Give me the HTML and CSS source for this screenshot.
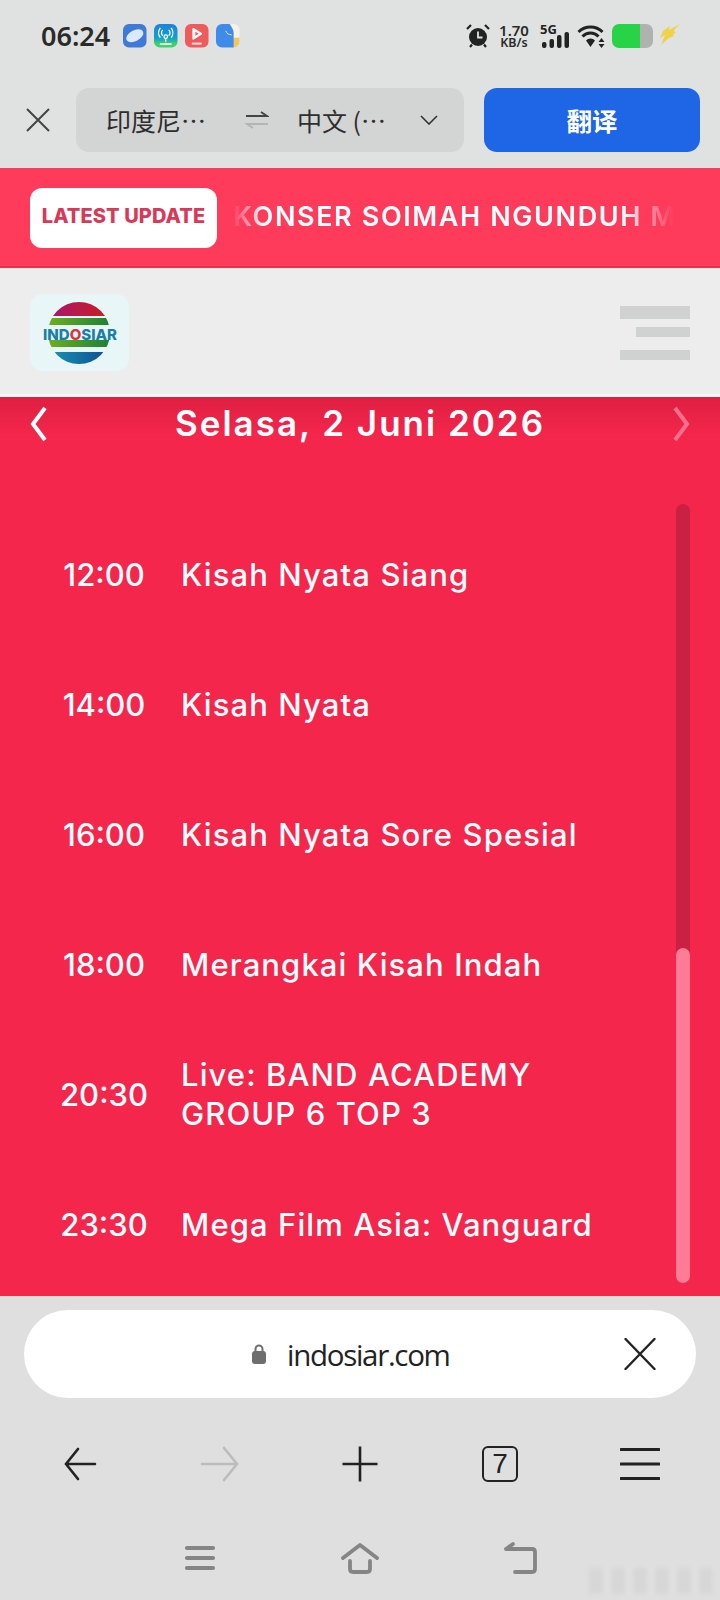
FILE: index.html
```html
<!DOCTYPE html>
<html lang="id">
<head>
<meta charset="utf-8">
<title>Indosiar</title>
<link rel="stylesheet" href="styles.css">
</head>
<body>
<div class="phone">
  <div class="status">
    <span class="clock">06:24</span>
    <div class="apps">
      <svg class="app" viewBox="0 0 24 24"><rect width="24" height="24" rx="6" fill="#3f7bd6"/><ellipse cx="12" cy="12" rx="9.500" ry="5.500" transform="rotate(-28 12 12)" fill="#dbe9fa"/></svg>
      <svg class="app" viewBox="0 0 24 24"><defs><linearGradient id="g1" x1="0" y1="0" x2="0" y2="1"><stop offset="0" stop-color="#1a82e0"/><stop offset=".6" stop-color="#14a0c8"/><stop offset=".85" stop-color="#3fd26a"/></linearGradient></defs><rect width="24" height="24" rx="6" fill="url(#g1)"/><circle cx="12" cy="13" r="1.800" fill="none" stroke="#fff" stroke-width="1.300"/><path d="M9 12a4 4 0 0 1 0-6M15 12a4 4 0 0 0 0-6M6.500 14a8 8 0 0 1 0-10M17.500 14a8 8 0 0 0 0-10M12 15v3" fill="none" stroke="#fff" stroke-width="1.300"/><path d="M6 20.500h12" stroke="#e8ffe0" stroke-width="2"/></svg>
      <svg class="app" viewBox="0 0 24 24"><rect width="24" height="24" rx="6" fill="#ef5b5b"/><path d="M8.500 5l8 5-8 5z" fill="#fff" stroke="#fff" stroke-width="2" stroke-linejoin="round"/><path d="M10.500 8l3.500 2-3.500 2z" fill="#ef5b5b"/><path d="M7 20h10" stroke="#ffe3e3" stroke-width="2"/></svg>
      <svg class="app" viewBox="0 0 24 24"><rect width="24" height="24" rx="6" fill="#f4f2ea"/><path d="M16 24h2a6 6 0 0 0 6-6v-4h-6z" fill="#f2c75c"/><path d="M6 0h8c2 3 4 6 4 9v15H6a6 6 0 0 1-6-6V6a6 6 0 0 1 6-6z" fill="#3f8bea"/><path d="M10 7c1 3 3 4 6 4" fill="none" stroke="#dbe9fa" stroke-width="1"/></svg>
    </div>
    <div class="sys">
      <svg class="alarm" viewBox="0 0 24 24"><circle cx="12" cy="13" r="9" fill="#222"/><path d="M12 7.500v6h4.500" fill="none" stroke="#e0e2e2" stroke-width="1.800"/><path d="M1 5l4-4M23 5l-4-4M4 23l2-2.500M20 23l-2-2.500" stroke="#222" stroke-width="2.200"/></svg>
      <div class="speed"><span class="speed-num">1.70</span><span class="speed-unit">KB/s</span></div>
      <div class="signal">
        <span class="net">5G</span>
        <svg class="bars" viewBox="0 0 27 16"><rect x="0" y="10" width="4.500" height="6" rx="2" fill="#222"/><rect x="7.500" y="7" width="4.500" height="9" rx="2" fill="#222"/><rect x="15" y="3" width="4.500" height="13" rx="2" fill="#222"/><rect x="22.500" y="0" width="4.500" height="16" rx="2" fill="#222"/></svg>
      </div>
      <svg class="wifi" viewBox="0 0 29 24"><path d="M1.500 8a17 17 0 0 1 24 0M5.500 12.500a11 11 0 0 1 16 0" fill="none" stroke="#222" stroke-width="3"/><path d="M9 16.500a6 6 0 0 1 9 0L13.500 23z" fill="#222"/><path d="M24.500 14l-3 4h6zM24.500 24l-3-4h6z" fill="#222"/></svg>
      <div class="battery"><span class="battery-fill"></span></div>
      <svg class="bolt" viewBox="0 0 20 21"><path d="M20 0L9 6l1-4-7 5-3 7 5-3-4 10 9-8-1 1 5-2-1-2 3-1-2-2 1-2z" fill="#eed24a"/></svg>
    </div>
  </div>

  <div class="translate">
    <svg class="tr-close" viewBox="0 0 24 24"><path d="M1 1l22 22M23 1L1 23" stroke="#444" stroke-width="2"/></svg>
    <div class="lang-pill">
      <span class="lang lang-a">印度尼…</span>
      <svg class="swap" viewBox="0 0 24 20"><path d="M1 6h21l-6-4" fill="none" stroke="#444" stroke-width="2"/><path d="M23 14H2l6 4" fill="none" stroke="#b4b4b4" stroke-width="2"/></svg>
      <span class="lang lang-b">中文 (…</span>
      <svg class="chev" viewBox="0 0 18 10"><path d="M1 1l8 8 8-8" fill="none" stroke="#333" stroke-width="1.600"/></svg>
    </div>
    <div class="tr-btn">翻译</div>
  </div>

  <div class="ticker">
    <div class="badge">LATEST UPDATE</div>
    <div class="marquee"><span>KONSER SOIMAH NGUNDUH MANTU</span></div>
  </div>

  <div class="site-head">
    <div class="logo">
      <svg viewBox="0 0 99 77">
        <defs>
          <clipPath id="disc"><circle cx="49" cy="39" r="31"/></clipPath>
          <linearGradient id="l1" x1="0" x2="1"><stop offset="0" stop-color="#a3147e"/><stop offset="1" stop-color="#d0200f"/></linearGradient>
          <linearGradient id="l2" x1="0" x2="1"><stop offset="0" stop-color="#7ab51d"/><stop offset="1" stop-color="#0e7a3a"/></linearGradient>
          <linearGradient id="l3" x1="0" x2="1"><stop offset="0" stop-color="#1aa0b8"/><stop offset="1" stop-color="#0c3f8e"/></linearGradient>
        </defs>
        <rect width="99" height="77" rx="13" fill="#e9f6f8"/>
        <g clip-path="url(#disc)">
          <rect x="10" y="8" width="80" height="14" fill="url(#l1)"/>
          <rect x="10" y="24" width="80" height="7" fill="url(#l2)"/>
          <rect x="10" y="46" width="80" height="7" fill="url(#l2)"/>
          <rect x="10" y="58" width="80" height="12" fill="url(#l3)"/>
        </g>
        <text class="logo-text" x="50" y="45.500" text-anchor="middle">IND<tspan class="logo-o">O</tspan>SIAR</text>
      </svg>
    </div>
    <div class="burger"><span class="b1"></span><span class="b2"></span><span class="b3"></span></div>
  </div>

  <main class="schedule">
    <div class="date-row">
      <svg class="date-arrow" viewBox="0 0 18 36"><path d="M15 2L3 18l12 16" fill="none" stroke="#fff" stroke-width="4"/></svg>
      <h1 class="date">Selasa, 2 Juni 2026</h1>
      <svg class="date-arrow" viewBox="0 0 18 36"><path d="M3 2l12 16L3 34" fill="none" stroke="#ff6f8b" stroke-width="4"/></svg>
    </div>
    <div class="list-wrap">
      <ul class="list">
        <li class="item"><span class="time">12:00</span><span class="show">Kisah Nyata Siang</span></li>
        <li class="item"><span class="time">14:00</span><span class="show">Kisah Nyata</span></li>
        <li class="item"><span class="time">16:00</span><span class="show">Kisah Nyata Sore Spesial</span></li>
        <li class="item"><span class="time">18:00</span><span class="show">Merangkai Kisah Indah</span></li>
        <li class="item"><span class="time">20:30</span><span class="show">Live: BAND ACADEMY GROUP 6 TOP 3</span></li>
        <li class="item"><span class="time">23:30</span><span class="show">Mega Film Asia: Vanguard</span></li>
      </ul>
      <div class="track"><div class="thumb"></div></div>
    </div>
  </main>

  <footer class="browser">
    <div class="url">
      <svg class="lock" viewBox="0 0 14 20"><path d="M3.500 9V5a3.500 3.500 0 0 1 7 0v4" fill="none" stroke="#6e6e6e" stroke-width="2"/><rect y="7" width="14" height="13" rx="3" fill="#6e6e6e"/></svg>
      <span class="url-text">indosiar.com</span>
      <svg class="url-x" viewBox="0 0 32 32"><path d="M1.500 1l29 30M30.500 1l-29 30" stroke="#222" stroke-width="2.400" stroke-linecap="round"/></svg>
    </div>
    <div class="tools">
      <svg class="tool" viewBox="0 0 40 40"><path d="M35 20H6M18 5L6 20l12 15" fill="none" stroke="#222" stroke-width="2.600" stroke-linecap="round"/></svg>
      <svg class="tool" viewBox="0 0 40 40"><path d="M2 20h35M24 4l13 16-13 16" fill="none" stroke="#bcbcbc" stroke-width="2.600" stroke-linecap="round"/></svg>
      <svg class="tool" viewBox="0 0 40 40"><path d="M2.500 20h35M20 2.500v35" fill="none" stroke="#222" stroke-width="2.600"/></svg>
      <div class="tabs">7</div>
      <svg class="tool" viewBox="0 0 40 40"><path d="M1 5.500h38M1 20h38M1 34.500h38" fill="none" stroke="#222" stroke-width="3" stroke-linecap="round"/></svg>
    </div>
    <div class="nav">
      <svg class="nav-i" viewBox="0 0 38 38"><path d="M6 9h26M6 19h26M6 29h26" fill="none" stroke="#858585" stroke-width="4.200" stroke-linecap="round"/></svg>
      <svg class="nav-i" viewBox="0 0 38 38"><path d="M2 19L19 6l17 13M9 22v8q0 3 3 3h14q3 0 3-3v-8" fill="none" stroke="#858585" stroke-width="3.800" stroke-linecap="round" stroke-linejoin="round"/></svg>
      <svg class="nav-i" viewBox="0 0 38 38"><path d="M5 10h26q3 0 3 3v17q0 3-3 3H14M12 5l-7 5" fill="none" stroke="#858585" stroke-width="3.800" stroke-linecap="round" stroke-linejoin="round"/></svg>
    </div>
    <div class="mark"></div>
  </footer>
</div>
</body>
</html>
```

FILE: styles.css
```css
* { box-sizing: border-box; }
html, body { margin: 0; padding: 0; }
body { width: 720px; height: 1600px; overflow: hidden; background: #dfe0e0; font-family: "Noto Sans", sans-serif; }
.phone { width: 720px; height: 1600px; display: flex; flex-direction: column; }

.status { height: 88px; padding: 18px 0 0 41px; display: flex; align-items: flex-start; background: #e0e2e2; }
.clock { width: 82px; font: 600 27px/36px "Noto Sans", sans-serif; color: #2a2a2a; }
.apps { display: flex; gap: 7.500px; margin-top: 6px; }
.app { width: 23.500px; height: 23.500px; display: block; }
.sys { margin-left: auto; margin-right: 40px; display: flex; align-items: flex-start; height: 24px; margin-top: 6px; }
.alarm { width: 24px; height: 24px; display: block; }
.speed { margin-left: 9px; width: 30px; height: 24px; display: flex; flex-direction: column; align-items: center; font-family: "Noto Sans", sans-serif; font-weight: 600; color: #2a2a2a; }
.speed-num { font-size: 15px; line-height: 13px; }
.speed-unit { font-size: 12.500px; line-height: 12px; }
.signal { margin-left: 11px; position: relative; width: 29px; height: 24px; }
.net { position: absolute; left: 0; top: -1px; font: 700 13px/12px "Noto Sans", sans-serif; color: #222; }
.bars { position: absolute; left: 2px; bottom: 0; width: 27px; height: 16px; display: block; }
.wifi { width: 29px; height: 24px; margin-left: 8px; display: block; }
.battery { width: 41px; height: 24px; margin-left: 6px; border-radius: 7px; background: #b0b2b0; overflow: hidden; }
.battery-fill { display: block; width: 28px; height: 24px; background: #27d445; border-radius: 7px 0 0 7px; }
.bolt { width: 20px; height: 21px; margin-left: 7px; display: block; }

.translate { height: 80px; padding: 0 20px 16px 26px; display: flex; align-items: center; background: #e0e2e2; }
.tr-close { width: 24px; height: 24px; display: block; }
.lang-pill { width: 388px; height: 64px; margin-left: 26px; background: #d3d4d4; border-radius: 13px; display: flex; align-items: center; }
.lang { font: 400 25px/32px "Noto Sans CJK SC", sans-serif; color: #2e2e2e; white-space: nowrap; }
.lang-a { margin-left: 30px; width: 139px; }
.lang-b { margin-left: 28px; width: 123px; }
.swap { width: 24px; height: 20px; display: block; }
.chev { width: 18px; height: 10px; display: block; }
.tr-btn { width: 216px; height: 64px; margin-left: 20px; background: #1e66e6; border-radius: 13px; color: #fff; font: 700 25.500px/64px "Noto Sans CJK SC", sans-serif; text-align: center; }

.ticker { height: 100px; background: #ff3b5c; border-bottom: 2px solid #e2324f; padding: 2px 0 0 30px; display: flex; align-items: center; }
.badge { width: 187px; height: 60px; border-radius: 12px; background: #fff; color: #d6395a; font: 800 20px/57px "Inter", sans-serif; letter-spacing: .1px; text-align: center; white-space: nowrap; }
.marquee { width: 444px; margin: 0 0 2px 16px; overflow: hidden; white-space: nowrap; -webkit-mask-image: linear-gradient(90deg, transparent 0, #000 30px, #000 390px, transparent 440px); mask-image: linear-gradient(90deg, transparent 0, #000 30px, #000 390px, transparent 440px); }
.marquee span { font: 600 27px/34px "Inter", sans-serif; color: #fff; letter-spacing: 1.6px; }

.site-head { height: 129px; background: #ededee; border-bottom: 3px solid #f4f7f7; padding: 26px 30px 0 30px; display: flex; align-items: flex-start; justify-content: space-between; }
.logo { width: 99px; height: 77px; }
.logo svg { display: block; width: 99px; height: 77px; }
.logo-text { font: 800 15px "Inter", sans-serif; fill: #1a7fa8; }
.logo-o { fill: #d9363e; }
.burger { width: 70px; margin-top: 12px; display: flex; flex-direction: column; align-items: flex-end; }
.burger span { display: block; background: #d0d1d1; }
.b1 { width: 70px; height: 13px; }
.b2 { width: 54px; height: 10px; margin-top: 8px; }
.b3 { width: 70px; height: 10px; margin-top: 13px; }

.schedule { height: 899px; background: linear-gradient(180deg, #de1f42 0, #f5264c 40px); display: flex; flex-direction: column; }
.date-row { height: 52px; padding: 0 30px; display: flex; align-items: center; justify-content: space-between; }
.date-arrow { width: 18px; height: 36px; display: block; margin-top: 2px; }
.date { margin: 0; font: 600 35px/52px "Inter", sans-serif; color: #fff; letter-spacing: 2px; white-space: nowrap; }
.list-wrap { position: relative; flex: 1; }
.list { list-style: none; margin: 0; padding: 60px 80px 0 0; }
.item { height: 130px; display: flex; align-items: center; color: #fff; }
.time { width: 181px; padding: 0 4px 0 31px; text-align: center; font: 500 31px/39px "Inter", sans-serif; }
.show { flex: 1; font: 500 31px/39px "Inter", sans-serif; letter-spacing: 1.100px; }
.track { position: absolute; right: 30px; top: 55px; width: 14px; height: 779px; border-radius: 7px; background: #c92044; }
.thumb { margin-top: 444px; height: 335px; border-radius: 7px; background: #ff7c97; }

.browser { flex: 1; background: #dfdfdf; padding: 14px 24px 0; position: relative; }
.url { height: 88px; border-radius: 44px; background: #fff; display: flex; align-items: center; padding: 0 40px 0 228px; }
.lock { width: 14px; height: 20px; margin-right: 21px; display: block; }
.url-text { font: 400 29.500px/40px "Open Sans", sans-serif; color: #222; letter-spacing: -1.300px; margin-top: 2px; }
.url-x { width: 32px; height: 32px; margin-left: auto; display: block; }
.tools { height: 40px; margin-top: 46px; padding: 0 36px; display: flex; align-items: center; justify-content: space-between; }
.tool { width: 40px; height: 40px; display: block; }
.tabs { width: 36px; height: 36px; margin: 0 2px; border: 2.500px solid #222; border-radius: 6px; text-align: center; font: 400 28px/31px "Liberation Sans Narrow", "Liberation Sans", sans-serif; color: #222; }
.nav { height: 38px; margin-top: 55px; padding: 0 157px; display: flex; align-items: center; justify-content: space-between; }
.nav-i { width: 38px; height: 38px; display: block; }
.mark { position: absolute; right: 6px; bottom: 6px; width: 125px; height: 26px; background: repeating-linear-gradient(90deg, #d2d2d2 0 14px, #e2e2e2 14px 22px); opacity: .6; filter: blur(2px); }
```
